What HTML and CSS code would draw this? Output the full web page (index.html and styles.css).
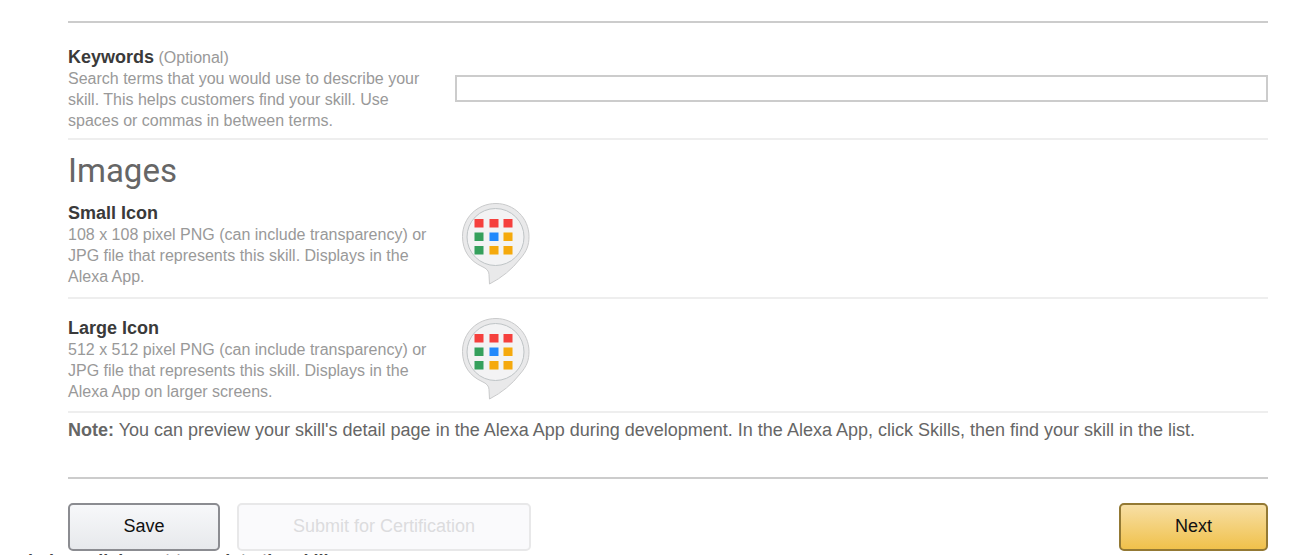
FILE: index.html
```html
<!DOCTYPE html>
<html lang="en">
<head>
<meta charset="utf-8">
<title>Skill publishing information</title>
<link rel="stylesheet" href="styles.css">
</head>
<body>
<svg class="defs" aria-hidden="true">
  <defs>
    <filter id="soft"><feGaussianBlur stdDeviation="0.6"/></filter>
  </defs>
  <symbol id="skill-icon" viewBox="0 0 70 84">
    <path d="M35 .5C16 .5 1.500 15 1.500 33.500C1.500 48 9 58 21 63.500Q28 66.500 28 71.500L28.500 81Q47 71.500 59 56C66 48 68 42 68 33.500C68 15 53 .5 35 .5Z" fill="#e9e9ea" stroke="#c9cacb"/>
    <circle cx="34.500" cy="34" r="28.500" fill="#f3f3f4" stroke="#bfc4c6"/>
    <g filter="url(#soft)">
      <path fill="#f53f3e" d="M13.500 16h9v8.500h-9zM28.500 16h9v8.500h-9zM42.500 16h9v8.500h-9z"/>
      <path fill="#34a05c" d="M13.500 29.500h9v8.500h-9zM13.500 43h9v8.500h-9z"/>
      <path fill="#2089fb" d="M28.500 29.500h9v8.500h-9z"/>
      <path fill="#f5a90d" d="M42.500 29.500h9v8.500h-9zM28.500 43h9v8.500h-9zM42.500 43h9v8.500h-9z"/>
    </g>
  </symbol>
</svg>
<form class="page">
  <section class="row keywords">
    <div class="text">
      <label class="name" for="keywords">Keywords</label> <span>(Optional)</span>
      <p>Search terms that you would use to describe your skill. This helps customers find your skill. Use spaces or commas in between terms.</p>
    </div>
    <input class="field" id="keywords" type="text">
  </section>
  <h2 class="heading">Images</h2>
  <section class="row small">
    <div class="text">
      <h3 class="name">Small Icon</h3>
      <p>108 x 108 pixel PNG (can include transparency) or JPG file that represents this skill. Displays in the Alexa App.</p>
    </div>
    <svg class="icon" role="img" aria-label="Small icon"><use href="#skill-icon"/></svg>
  </section>
  <section class="row large">
    <div class="text">
      <h3 class="name">Large Icon</h3>
      <p>512 x 512 pixel PNG (can include transparency) or JPG file that represents this skill. Displays in the Alexa App on larger screens.</p>
    </div>
    <svg class="icon" role="img" aria-label="Large icon"><use href="#skill-icon"/></svg>
  </section>
  <p class="note"><b>Note:</b> You can preview your skill's detail page in the Alexa App during development. In the Alexa App, click Skills, then find your skill in the list.</p>
  <div class="actions">
    <button class="button save" type="button">Save</button>
    <button class="button submit" type="button" disabled>Submit for Certification</button>
    <button class="button next" type="button">Next</button>
  </div>
</form>
<p class="caption">below, click next to update the skill</p>
</body>
</html>
```
FILE: styles.css
```css
* { box-sizing: border-box; }
html { overflow: hidden; }
body {
  margin: 0;
  background: #fff;
  color: #999;
  font: 16px/21px "Liberation Sans", Arial, sans-serif;
}
p, h2, h3 { margin: 0; }
.defs { display: block; width: 0; height: 0; }
.page { margin: 21px 33px 0 68px; border-top: 2px solid #ccc; }
.row {
  display: grid;
  grid-template-columns: 367px 1fr;
  column-gap: 20px;
  border-bottom: 2px solid #eee;
}
.keywords { padding: 24px 0 7px; align-items: center; }
.small { padding-bottom: 10px; }
.large { padding: 19px 0 9px; }
.name { color: #3a3a3a; font-size: 18px; font-weight: bold; line-height: 21px; }
.field { width: 100%; height: 27px; margin-top: -2px; border: 2px solid #ccc; background: #fff; }
.heading {
  padding: 1px 0 2px;
  color: #666;
  font: 400 33px/60px Roboto, sans-serif;
}
.icon { width: 70px; height: 84px; margin-left: 6px; }
.note { padding: 6px 0 36px; color: #666; font-size: 18px; line-height: 22px; border-bottom: 2px solid #ccc; }
.actions { display: flex; gap: 17px; padding-top: 24px; }
.button {
  height: 48px;
  padding: 0 6px 2px;
  border: 2px solid #8b8c91;
  border-radius: 5px;
  color: #111;
  font: 18px/21px "Liberation Sans", Arial, sans-serif;
}
.save { width: 152px; background: linear-gradient(#f7f8fa, #e7e9ec); }
.submit { width: 294px; background: #fafafc; border-color: #e8e8e9; color: #dcdcde; }
.next { width: 149px; margin-left: auto; background: linear-gradient(#f7dfa5, #f0c14b); border-color: #937934; }
.caption { margin-left: 28px; color: #444; font-size: 18px; font-weight: bold; line-height: 21px; }
```
